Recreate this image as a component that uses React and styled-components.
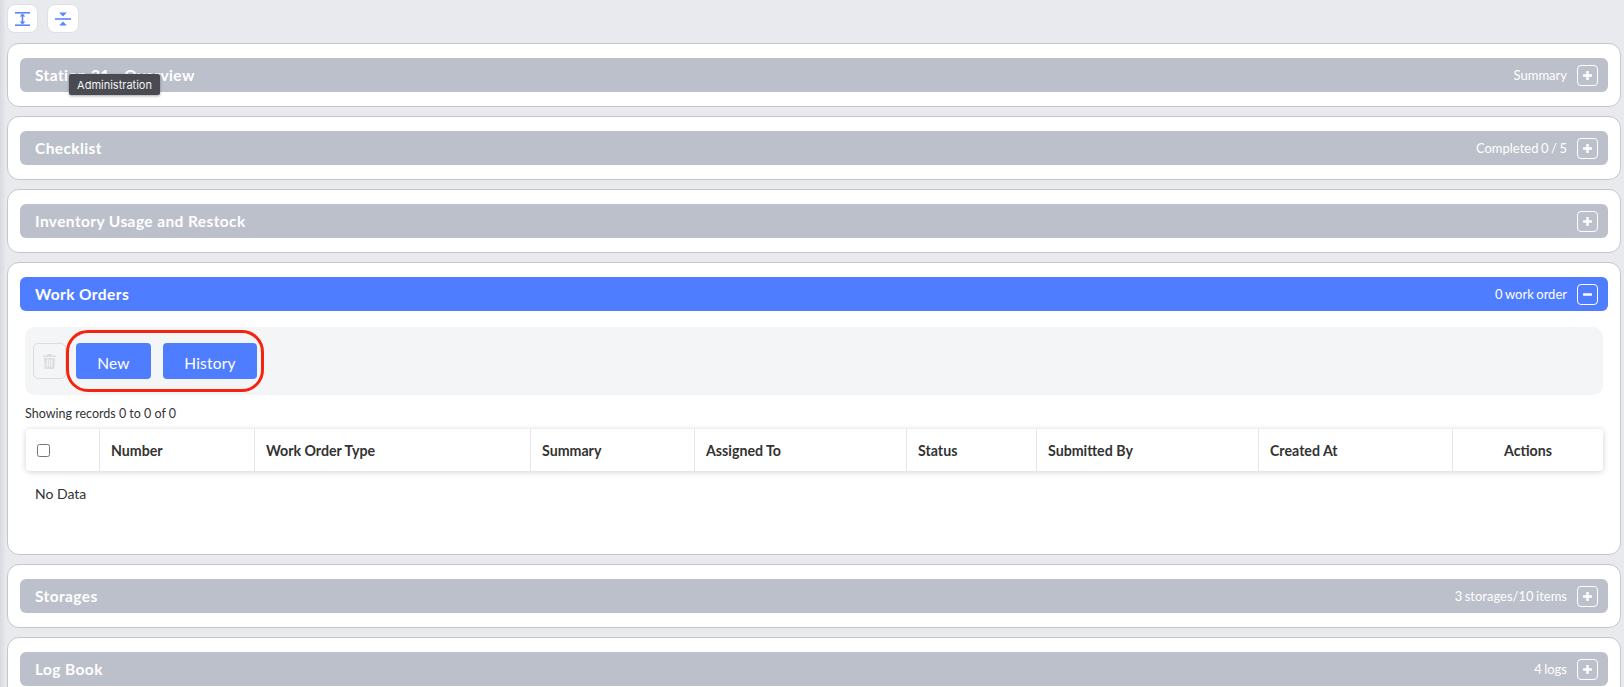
import React from "react";
import styled, { createGlobalStyle } from "styled-components";

const GlobalStyle = createGlobalStyle`
  html, body {
    margin: 0;
    height: 100%;
    overflow: hidden;
    background: #e9eaee;
    font-family: Lato, "Liberation Sans", sans-serif;
  }
`;

const Page = styled.div`
  position: relative;
  height: 687px;
  overflow: hidden;
  padding: 4px 3px 0 7px;
  box-sizing: border-box;
  background: linear-gradient(90deg, #d9dadf 0, #e9eaee 6px);
`;

const TopBar = styled.div`
  display: flex;
  gap: 9px;
  height: 29px;
  margin-bottom: 10px;
`;

const IconButton = styled.button`
  display: flex;
  align-items: center;
  justify-content: center;
  width: ${(props) => props.$width}px;
  padding: 0;
  background: #fff;
  border: 1px solid #dfe0e4;
  border-radius: 8px;
`;

const CardList = styled.div`
  display: flex;
  flex-direction: column;
  gap: 9px;
`;

const Card = styled.section`
  box-sizing: border-box;
  padding: 14px 12px;
  background: #fff;
  border: 1px solid #c5c6ca;
  border-radius: 12px;
`;

const CardHeader = styled.header`
  display: flex;
  align-items: center;
  justify-content: space-between;
  height: 34px;
  padding: 0 10px 0 15px;
  border-radius: 6px;
  color: #fff;
  background: ${(props) => (props.$open ? "#4f7dff" : "#bcc0cb")};
`;

const CardTitle = styled.div`
  font-size: 15.5px;
  font-weight: 700;
  letter-spacing: 0.4px;
`;

const HeaderRight = styled.div`
  display: flex;
  align-items: center;
  gap: 10px;
  font-size: 13px;
  word-spacing: -0.8px;
`;

const ToggleBox = styled.span`
  display: flex;
  align-items: center;
  justify-content: center;
  width: 19px;
  height: 19px;
  border: 1px solid #fff;
  border-radius: 4px;
`;

const CardBody = styled.div`
  padding: 16px 5px 0 5px;
  height: 229px;
  box-sizing: border-box;
`;

const ToolPanel = styled.div`
  display: flex;
  align-items: center;
  height: 68px;
  padding: 0 8px;
  box-sizing: border-box;
  gap: 10px;
  background: #f4f5f7;
  border-radius: 10px;
`;

const TrashButton = styled.div`
  display: flex;
  align-items: center;
  justify-content: center;
  width: 33px;
  height: 36px;
  box-sizing: border-box;
  border: 1px solid #dcdddf;
  border-radius: 5px;
`;

const Highlight = styled.div`
  position: relative;
  display: flex;
  gap: 12px;
`;

const HighlightRing = styled.div`
  position: absolute;
  left: -10px;
  top: -13px;
  width: 198px;
  height: 62px;
  box-sizing: border-box;
  border: 3px solid #f5230f;
  border-radius: 22px;
`;

const PrimaryButton = styled.div`
  display: flex;
  align-items: center;
  justify-content: center;
  width: ${(props) => props.$width}px;
  height: 36px;
  padding-top: 3px;
  box-sizing: border-box;
  background: #4f7dff;
  color: #fff;
  border-radius: 4px;
  font-size: 15.5px;
  letter-spacing: 0.2px;
`;

const RecordCount = styled.div`
  margin: 10px 0 6px 0;
  font-size: 12.5px;
  line-height: 18px;
  color: #333;
`;

const TableHead = styled.div`
  display: grid;
  grid-template-columns: 74px 155px 276px 164px 212px 130px 222px 194px 1fr;
  height: 42px;
  margin-left: 1px;
  background: #fff;
  border-radius: 4px;
  box-shadow: 0 1px 6px rgba(0, 0, 0, 0.18);
`;

const HeadCell = styled.div`
  display: flex;
  align-items: center;
  justify-content: ${(props) => (props.$center ? "center" : "flex-start")};
  padding-left: ${(props) => (props.$center ? 0 : 11)}px;
  border-right: ${(props) => (props.$last ? "none" : "1px solid #e6e6e6")};
  font-size: 14.2px;
  font-weight: 700;
  color: #333;
`;

const CheckBox = styled.input`
  width: 13px;
  height: 13px;
  margin: 0;
`;

const EmptyRow = styled.div`
  padding: 14px 0 0 10px;
  font-size: 14px;
  line-height: 18px;
  color: #333;
`;

const Tooltip = styled.div`
  position: absolute;
  left: 69px;
  top: 74px;
  display: flex;
  align-items: center;
  justify-content: center;
  width: 91px;
  height: 21px;
  background: #4a4b52;
  color: #f2f2f2;
  border-radius: 2px;
  font-family: Inter, "Liberation Sans", sans-serif;
  font-size: 11px;
  box-shadow: 0 1px 3px rgba(0, 0, 0, 0.35);
`;

const ExpandIcon = () => (
  <svg width="15" height="14" viewBox="0 0 15 14" fill="#5b86ff">
    <rect x="0" y="0" width="15" height="1.6" />
    <rect x="0" y="12.4" width="15" height="1.6" />
    <rect x="6.7" y="2" width="1.6" height="10" />
    <path d="M4.6 4.4h5.8L7.5 1.6zM4.6 9.6h5.8L7.5 12.4z" />
  </svg>
);

const CollapseIcon = () => (
  <svg width="16" height="14" viewBox="0 0 16 14" fill="#5b86ff">
    <rect x="0" y="6.2" width="16" height="1.6" />
    <path d="M4.2 0.4h7.6L8 4.6zM4.2 13.6h7.6L8 9.4z" />
  </svg>
);

const PlusIcon = () => (
  <svg width="9" height="9" viewBox="0 0 9 9" fill="#fff">
    <rect x="0" y="3.3" width="9" height="2.4" rx="0.6" />
    <rect x="3.3" y="0" width="2.4" height="9" rx="0.6" />
  </svg>
);

const MinusIcon = () => (
  <svg width="9" height="9" viewBox="0 0 9 9" fill="#fff">
    <rect x="0" y="3.3" width="9" height="2.4" rx="0.6" />
  </svg>
);

const TrashIcon = () => (
  <svg width="13" height="15" viewBox="0 0 13 15" fill="#dcdddf">
    <path d="M4.5 0h4l.6 1.4H13v1.5H0V1.4h3.9z" />
    <path d="M1 4h11l-.7 11H1.7zM3.6 5.6v7.6h1.2V5.6zm2.3 0v7.6h1.2V5.6zm2.3 0v7.6h1.2V5.6z" fillRule="evenodd" />
  </svg>
);

const columns = [
  "Number",
  "Work Order Type",
  "Summary",
  "Assigned To",
  "Status",
  "Submitted By",
  "Created At",
];

const Section = ({ title, info, open, children }) => (
  <Card>
    <CardHeader $open={open}>
      <CardTitle>{title}</CardTitle>
      <HeaderRight>
        {info && <span>{info}</span>}
        <ToggleBox>{open ? <MinusIcon /> : <PlusIcon />}</ToggleBox>
      </HeaderRight>
    </CardHeader>
    {children}
  </Card>
);

export default function App() {
  return (
    <Page>
      <GlobalStyle />
      <TopBar>
        <IconButton $width={31}>
          <ExpandIcon />
        </IconButton>
        <IconButton $width={32}>
          <CollapseIcon />
        </IconButton>
      </TopBar>
      <CardList>
        <Section title="Station 21 - Overview" info="Summary" />
        <Section title="Checklist" info="Completed 0 / 5" />
        <Section title="Inventory Usage and Restock" />
        <Section title="Work Orders" info="0 work order" open>
          <CardBody>
            <ToolPanel>
              <TrashButton>
                <TrashIcon />
              </TrashButton>
              <Highlight>
                <HighlightRing />
                <PrimaryButton $width={75}>New</PrimaryButton>
                <PrimaryButton $width={94}>History</PrimaryButton>
              </Highlight>
            </ToolPanel>
            <RecordCount>Showing records 0 to 0 of 0</RecordCount>
            <TableHead>
              <HeadCell>
                <CheckBox type="checkbox" />
              </HeadCell>
              {columns.map((name) => (
                <HeadCell key={name}>{name}</HeadCell>
              ))}
              <HeadCell $center $last>
                Actions
              </HeadCell>
            </TableHead>
            <EmptyRow>No Data</EmptyRow>
          </CardBody>
        </Section>
        <Section title="Storages" info="3 storages/10 items" />
        <Section title="Log Book" info="4 logs" />
      </CardList>
      <Tooltip>Administration</Tooltip>
    </Page>
  );
}
